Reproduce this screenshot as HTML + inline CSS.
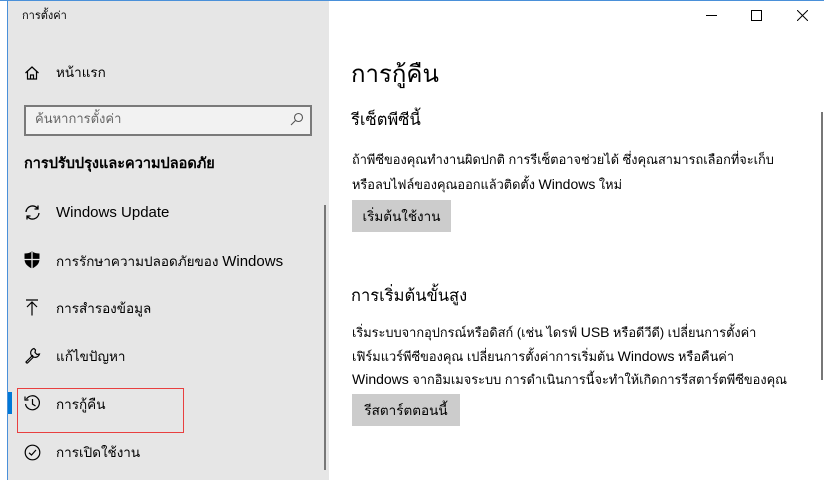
<!DOCTYPE html>
<html><head><meta charset="utf-8"><style>
*{margin:0;padding:0;box-sizing:border-box}
body{width:824px;height:480px;overflow:hidden;background:#fff;position:relative;font-family:"Liberation Sans","Noto Sans CJK SC",sans-serif;color:#000}
.t{position:absolute;white-space:nowrap;line-height:1}
.s{font-size:13.5px}.s b{font-weight:normal;font-size:15px}
.p{font-size:12.8px}.p b{font-weight:normal;font-size:14px}
#side{position:absolute;left:8px;top:0;width:321px;height:480px;background:#e6e6e6}
#lb{position:absolute;left:7px;top:0;width:1px;height:480px;background:#4a90d9}
#tb{position:absolute;left:0;top:0;width:824px;height:1px;background:#4a90d9}
.ic{position:absolute}
.btn{position:absolute;background:#cccccc;font-size:13.5px;display:flex;align-items:center;justify-content:center}
</style></head><body>
<div id="side"></div><div id="lb"></div><div id="tb"></div>
<div class="t" style="left:22px;top:11px;font-size:11px">การตั้งค่า</div>
<svg class="ic" style="left:24px;top:65px" width="16" height="16" viewBox="0 0 16 16" fill="none" stroke="#000" stroke-width="1.2"><path d="M1.5 8 L8 2 L14.5 8 M3.5 6.5 V14 H12.5 V6.5 M6.5 14 V10 H9.5 V14"/></svg>
<div class="t s" style="left:56px;top:66px">หน้าแรก</div>
<div style="position:absolute;left:24px;top:105px;width:288px;height:31px;border:2px solid #7a7a7a;background:#f2f2f2"></div>
<div class="t" style="left:35px;top:112px;font-size:13px;color:#666">ค้นหาการตั้งค่า</div>
<svg class="ic" style="left:290px;top:112px" width="14" height="14" viewBox="0 0 14 14" fill="none" stroke="#555" stroke-width="1.1"><circle cx="8.5" cy="5.5" r="4"/><path d="M5.5 8.5 L1 13"/></svg>
<div class="t" style="left:24px;top:157px;font-size:14.5px;font-weight:bold">การปรับปรุงและความปลอดภัย</div>
<div style="position:absolute;left:324px;top:205px;width:2px;height:265px;background:#777"></div>
<svg class="ic" style="left:24px;top:204px" width="17" height="17" viewBox="0 0 17 17" fill="none" stroke="#000" stroke-width="1.3"><path d="M2 8 A6.5 6.5 0 0 1 14 5 M15 9 A6.5 6.5 0 0 1 3 12 M14 1.5 V5 H10.5 M3 15.5 V12 H6.5"/></svg>
<div class="t" style="left:56px;top:205px;font-size:15px">Windows Update</div>
<svg class="ic" style="left:24px;top:251px" width="16" height="18" viewBox="0 0 16 18"><path d="M8 0.5 C5.5 2 3 2.5 0.5 2.5 V8 C0.5 12.5 3.5 15.5 8 17.5 C12.5 15.5 15.5 12.5 15.5 8 V2.5 C13 2.5 10.5 2 8 0.5Z" fill="#000"/><path d="M8 1 V17.5 M0.5 8.5 H15.5" stroke="#e6e6e6" stroke-width="1.3"/></svg>
<div class="t s" style="left:56px;top:254px">การรักษาความปลอดภัยของ <b>Windows</b></div>
<svg class="ic" style="left:24px;top:299px" width="16" height="17" viewBox="0 0 16 17" fill="none" stroke="#000" stroke-width="1.2"><path d="M2 1 H14 M8 3 V16.5 M3 8 L8 3 L13 8"/></svg>
<div class="t s" style="left:56px;top:302px">การสำรองข้อมูล</div>
<svg class="ic" style="left:24px;top:347px" width="17" height="17" viewBox="0 0 17 17" fill="none" stroke="#000" stroke-width="1.2"><path d="M10 1.5 A4.5 4.5 0 1 0 15.5 7 L13 7.5 L11 5.5 L11.5 3 Z M9 8 L2 15 A1.3 1.3 0 0 0 3.5 16 L10 9.5"/></svg>
<div class="t s" style="left:56px;top:350px">แก้ไขปัญหา</div>
<div style="position:absolute;left:8px;top:392px;width:4px;height:22px;background:#0078d7"></div>
<svg class="ic" style="left:24px;top:395px" width="17" height="17" viewBox="0 0 17 17" fill="none" stroke="#000" stroke-width="1.2"><path d="M2.5 4 A7 7 0 1 1 1.5 9 M1 1.5 V5 H4.5 M8.5 4 V9 L11.5 11"/></svg>
<div class="t s" style="left:56px;top:398px">การกู้คืน</div>
<div style="position:absolute;left:17px;top:388px;width:167px;height:45px;border:1px solid #e84040"></div>
<svg class="ic" style="left:24px;top:444px" width="17" height="17" viewBox="0 0 17 17" fill="none" stroke="#000" stroke-width="1.2"><circle cx="8.5" cy="8.5" r="7.3"/><path d="M5 8.8 L7.5 11 L12 6"/></svg>
<div class="t s" style="left:56px;top:446px">การเปิดใช้งาน</div>
<div style="position:absolute;left:706px;top:15px;width:11px;height:1px;background:#000"></div>
<div style="position:absolute;left:751px;top:10px;width:11px;height:11px;border:1px solid #000"></div>
<svg class="ic" style="left:797px;top:10px" width="11" height="11" viewBox="0 0 11 11" stroke="#000" stroke-width="1"><path d="M0 0 L11 11 M11 0 L0 11"/></svg>
<div class="t" style="left:351px;top:63px;font-size:24px;font-weight:300">การกู้คืน</div>
<div class="t" style="left:351px;top:112px;font-size:16.5px">รีเซ็ตพีซีนี้</div>
<div class="t p" style="left:352px;top:154px">ถ้าพีซีของคุณทำงานผิดปกติ การรีเซ็ตอาจช่วยได้ ซึ่งคุณสามารถเลือกที่จะเก็บ</div>
<div class="t p" style="left:352px;top:177px">หรือลบไฟล์ของคุณออกแล้วติดตั้ง <b>Windows</b> ใหม่</div>
<div class="btn" style="left:352px;top:200px;width:99px;height:32px">เริ่มต้นใช้งาน</div>
<div class="t" style="left:351px;top:288px;font-size:16.5px">การเริ่มต้นขั้นสูง</div>
<div class="t p" style="left:352px;top:325px">เริ่มระบบจากอุปกรณ์หรือดิสก์ (เช่น ไดรฟ์ <b>USB</b> หรือดีวีดี) เปลี่ยนการตั้งค่า</div>
<div class="t p" style="left:352px;top:349px">เฟิร์มแวร์พีซีของคุณ เปลี่ยนการตั้งค่าการเริ่มต้น <b>Windows</b> หรือคืนค่า</div>
<div class="t p" style="left:352px;top:372px"><b>Windows</b> จากอิมเมจระบบ การดำเนินการนี้จะทำให้เกิดการรีสตาร์ตพีซีของคุณ</div>
<div class="btn" style="left:352px;top:394px;width:108px;height:32px">รีสตาร์ตตอนนี้</div>
<div style="position:absolute;left:821px;top:112px;width:2px;height:268px;background:#777"></div>
</body></html>
